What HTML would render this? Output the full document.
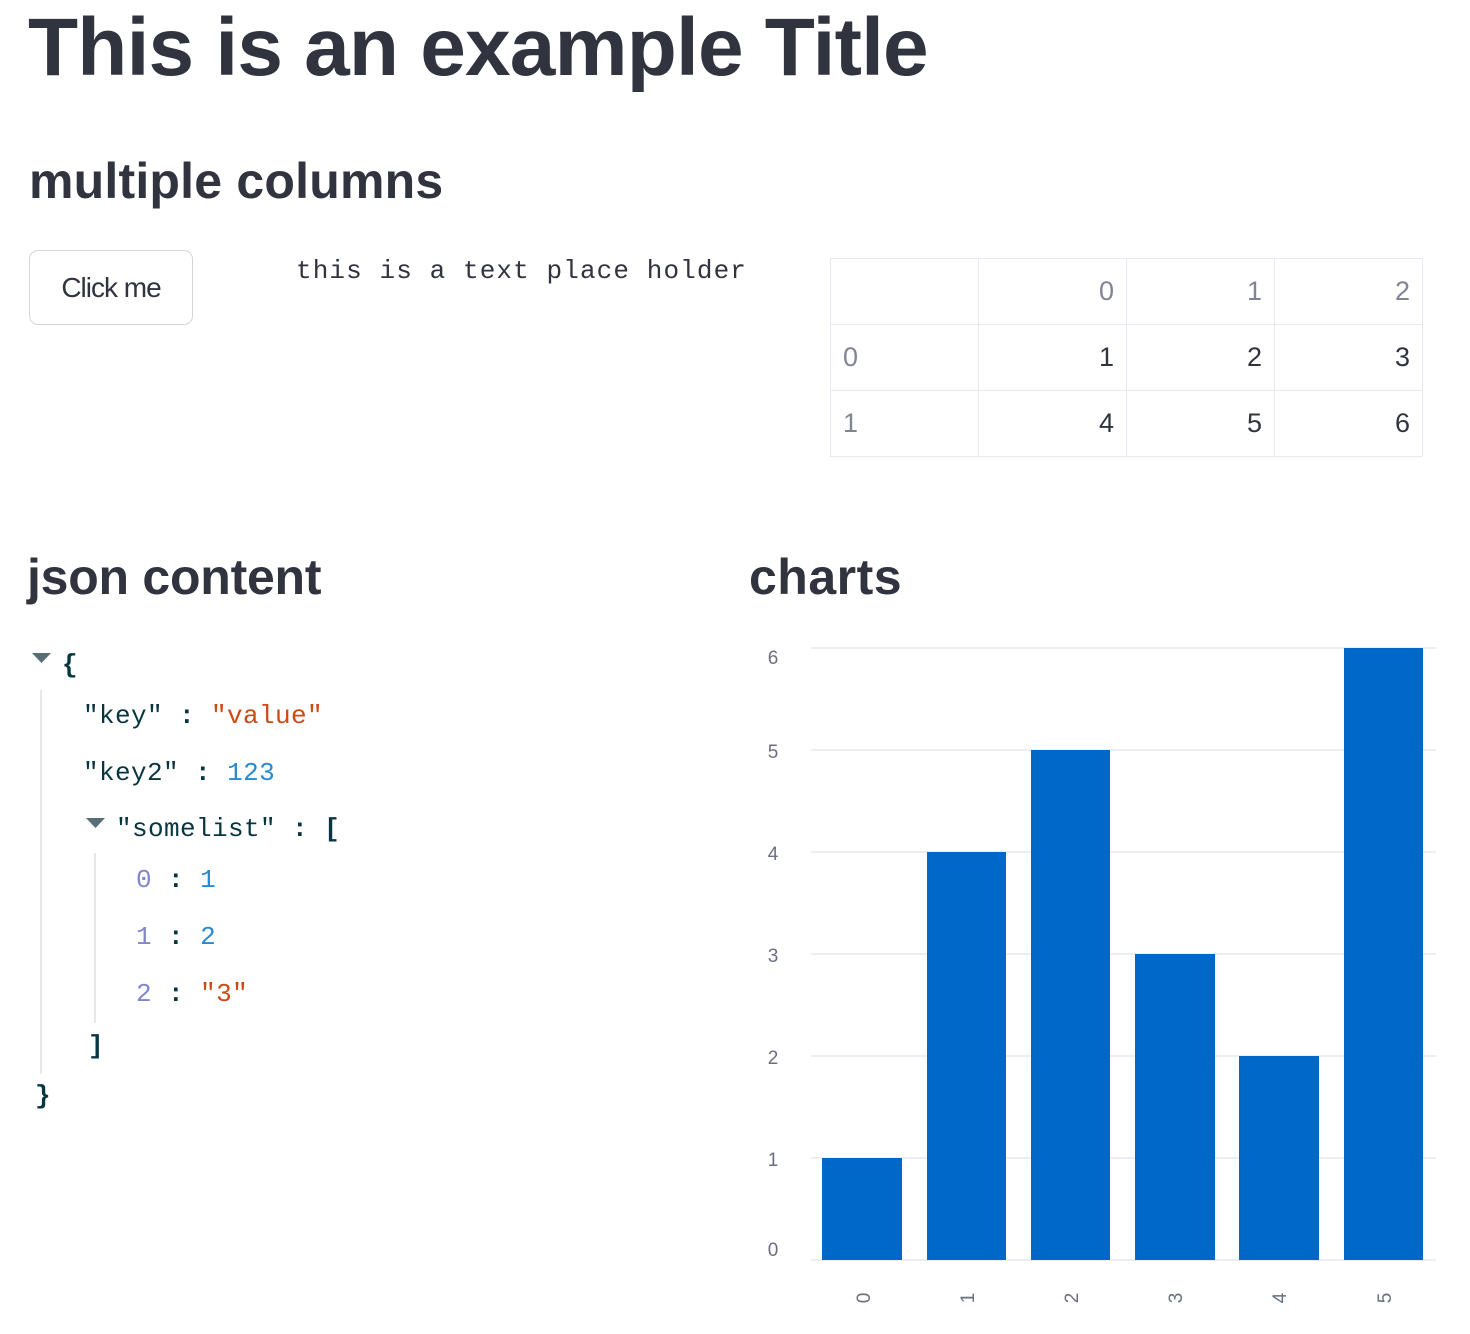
<!DOCTYPE html>
<html><head><meta charset="utf-8"><style>
body{margin:0;width:1470px;height:1334px;background:#fff;position:relative;overflow:hidden;font-family:"Liberation Sans",sans-serif;color:#31333f}
.a{position:absolute;white-space:nowrap}
h1,h2{margin:0;font-weight:bold}
.mono{font-family:"Liberation Mono",monospace}
.j{font-family:"Liberation Mono",monospace;font-size:26px;letter-spacing:0.4px;color:#073642}
.s{color:#cb4b16}.n{color:#268bd2}.i{color:#6c71c4;opacity:.85}
b{font-weight:bold}
table{border-collapse:collapse;font-size:27px}
td{border:1px solid #e6e9ef;width:148px;height:66px;padding:0 12px;box-sizing:border-box;text-align:right}
td.h{color:#808495}
td.l{text-align:left}
</style></head><body>
<h1 class="a" style="left:28px;top:1px;font-size:82px;letter-spacing:-0.8px">This is an example Title</h1>
<h2 class="a" style="left:29px;top:152px;font-size:50px;letter-spacing:0.2px">multiple columns</h2>
<div class="a" style="left:29px;top:250px;width:164px;height:75px;border:1px solid #d6d6d9;border-radius:9px;box-sizing:border-box;font-size:28px;line-height:73px;text-align:center;letter-spacing:-1px">Click me</div>
<div class="a mono" style="left:296px;top:256px;font-size:26px;letter-spacing:1.1px">this is a text place holder</div>
<table class="a" style="left:830px;top:258px">
<tr><td></td><td class="h">0</td><td class="h">1</td><td class="h">2</td></tr>
<tr><td class="h l">0</td><td>1</td><td>2</td><td>3</td></tr>
<tr><td class="h l">1</td><td>4</td><td>5</td><td>6</td></tr>
</table>
<h2 class="a" style="left:27px;top:548px;font-size:50px;letter-spacing:-0.25px">json content</h2>
<h2 class="a" style="left:749px;top:548px;font-size:50px;letter-spacing:0.5px">charts</h2>
<!-- json -->
<svg class="a" style="left:32px;top:653px" width="20" height="12"><polygon points="0,0 19,0 9.5,10" fill="#586e75"/></svg>
<div class="a j" style="left:62px;top:650px"><b>{</b></div>
<div class="a" style="left:40px;top:690px;width:2px;height:384px;background:#e8e8e8"></div>
<div class="a j" style="left:83px;top:701px">"key" <b>:</b> <span class="s">"value"</span></div>
<div class="a j" style="left:83px;top:758px">"key2" <b>:</b> <span class="n">123</span></div>
<svg class="a" style="left:86px;top:818px" width="20" height="12"><polygon points="0,0 19,0 9.5,10" fill="#586e75"/></svg>
<div class="a j" style="left:116px;top:814px">"somelist" <b>:</b> <b>[</b></div>
<div class="a" style="left:94px;top:853px;width:2px;height:170px;background:#e8e8e8"></div>
<div class="a j" style="left:136px;top:865px"><span class="i">0</span> <b>:</b> <span class="n">1</span></div>
<div class="a j" style="left:136px;top:922px"><span class="i">1</span> <b>:</b> <span class="n">2</span></div>
<div class="a j" style="left:136px;top:979px"><span class="i">2</span> <b>:</b> <span class="s">"3"</span></div>
<div class="a j" style="left:88px;top:1031px"><b>]</b></div>
<div class="a j" style="left:35px;top:1081px"><b>}</b></div>
<!-- chart -->
<svg class="a" style="left:740px;top:630px" width="730" height="704" font-family="Liberation Sans,sans-serif" font-size="19" fill="#6b6f80">
<g stroke="#e6e9ef" stroke-width="1.5">
<line x1="71" x2="696" y1="18" y2="18"/><line x1="71" x2="696" y1="120" y2="120"/><line x1="71" x2="696" y1="222" y2="222"/><line x1="71" x2="696" y1="324" y2="324"/><line x1="71" x2="696" y1="426" y2="426"/><line x1="71" x2="696" y1="528" y2="528"/><line x1="71" x2="696" y1="630" y2="630"/>
</g>
<g text-anchor="middle">
<text x="33" y="34">6</text><text x="33" y="128">5</text><text x="33" y="230">4</text><text x="33" y="332">3</text><text x="33" y="434">2</text><text x="33" y="536">1</text><text x="33" y="626">0</text>
</g>
<g fill="#0068c9">
<rect x="82" y="528" width="80" height="102"/>
<rect x="187" y="222" width="79" height="408"/>
<rect x="291" y="120" width="79" height="510"/>
<rect x="395" y="324" width="80" height="306"/>
<rect x="499" y="426" width="80" height="204"/>
<rect x="604" y="18" width="79" height="612"/>
</g>
<g>
<text transform="translate(130,668) rotate(-90)" text-anchor="middle">0</text>
<text transform="translate(234,668) rotate(-90)" text-anchor="middle">1</text>
<text transform="translate(338,668) rotate(-90)" text-anchor="middle">2</text>
<text transform="translate(442,668) rotate(-90)" text-anchor="middle">3</text>
<text transform="translate(546,668) rotate(-90)" text-anchor="middle">4</text>
<text transform="translate(651,668) rotate(-90)" text-anchor="middle">5</text>
</g>
</svg>
</body></html>
